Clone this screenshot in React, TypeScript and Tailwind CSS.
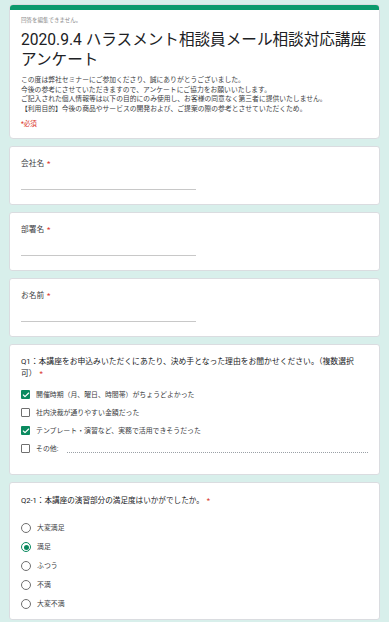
import { Check } from "lucide-react";

const font = "font-['Roboto','Noto_Sans_CJK_JP',sans-serif]";

function Req() {
  return <span className="inline-block text-[#d93025] ml-[3px]">*</span>;
}

function TextQuestion({ label }: { label: string }) {
  return (
    <div className="bg-white rounded-[3px] border border-[#dadce0] px-[11px] pt-[12px] pb-[14px]">
      <div className="text-[7.7px] leading-[10px] text-[#3c4043]">
        {label}
        <Req />
      </div>
      <div className="mt-[20px] w-[175px] border-b border-[#c8c8c8] h-[1px]" />
    </div>
  );
}

const options = [
  { label: "開催時期（月、曜日、時間帯）がちょうどよかった", checked: true },
  { label: "社内決裁が通りやすい金額だった", checked: false },
  { label: "テンプレート・演習など、実務で活用できそうだった", checked: true },
];

const rates = ["大変満足", "満足", "ふつう", "不満", "大変不満"];

function Box({ checked }: { checked: boolean }) {
  return checked ? (
    <span className="w-[9px] h-[9px] rounded-[1px] bg-[#0a8a5f] flex items-center justify-center">
      <Check size={8} strokeWidth={3.5} className="text-white" />
    </span>
  ) : (
    <span className="w-[9px] h-[9px] rounded-[1px] border border-[#6f6f6f]" />
  );
}

export default function App() {
  return (
    <div className={`${font} min-h-screen bg-[#d8efeb] px-[9px] pt-[4px] pb-[10px]`}>
      <div className="flex flex-col gap-[7px]">
        <div className="bg-white rounded-[4px] border border-[#dadce0] overflow-hidden">
          <div className="h-[5px] bg-[#0b9a6d]" />
          <div className="px-[11px] pt-[6px] pb-[9px]">
            <div className="text-[5.5px] text-[#8a8a8a]">回答を編集できません。</div>
            <h1 className="mt-[6px] text-[15.6px] leading-[20px] text-[#202124] font-normal">
              2020.9.4 ハラスメント相談員メール相談対応講座アンケート
            </h1>
            <div className="mt-[6px] text-[6.8px] leading-[9.6px] text-[#3c4043]">
              <div>この度は弊社セミナーにご参加くださり、誠にありがとうございました。</div>
              <div>今後の参考にさせていただきますので、アンケートにご協力をお願いいたします。</div>
              <div>ご記入された個人情報等は以下の目的にのみ使用し、お客様の同意なく第三者に提供いたしません。</div>
              <div>【利用目的】今後の商品やサービスの開発および、ご提案の際の参考とさせていただくため。</div>
            </div>
            <div className="mt-[5px] text-[6.5px] text-[#d93025]">*必須</div>
          </div>
        </div>

        <TextQuestion label="会社名" />
        <TextQuestion label="部署名" />
        <TextQuestion label="お名前" />

        <div className="bg-white rounded-[3px] border border-[#dadce0] px-[11px] pt-[11px] pb-[21px]">
          <div className="text-[7.8px] leading-[11.5px] text-[#202124] pr-[6px]">
            Q1：本講座をお申込みいただくにあたり、決め手となった理由をお聞かせください。（複数選択可）
            <Req />
          </div>
          <div className="mt-[11px] flex flex-col gap-[9px]">
            {options.map((o) => (
              <div key={o.label} className="flex items-center gap-[6px] h-[9px]">
                <Box checked={o.checked} />
                <span className="text-[6.9px] text-[#3c4043]">{o.label}</span>
              </div>
            ))}
            <div className="flex items-center gap-[6px] h-[9px]">
              <Box checked={false} />
              <span className="text-[6.9px] text-[#3c4043]">その他:</span>
              <span className="ml-[3px] mt-[8px] w-[301px] border-b border-dotted border-[#9aa0a6]" />
            </div>
          </div>
        </div>

        <div className="bg-white rounded-[3px] border border-[#dadce0] px-[11px] pt-[12px] pb-[10px]">
          <div className="text-[7.6px] leading-[11px] text-[#202124]">
            Q2-1：本講座の演習部分の満足度はいかがでしたか。
            <Req />
          </div>
          <div className="mt-[17px] flex flex-col gap-[9px]">
            {rates.map((r) => (
              <div key={r} className="flex items-center gap-[6px] h-[10px]">
                {r === "満足" ? (
                  <span className="w-[10px] h-[10px] rounded-full border border-[#0a8a5f] flex items-center justify-center">
                    <span className="w-[5px] h-[5px] rounded-full bg-[#0a8a5f]" />
                  </span>
                ) : (
                  <span className="w-[10px] h-[10px] rounded-full border border-[#6f6f6f]" />
                )}
                <span className="text-[6.9px] text-[#3c4043]">{r}</span>
              </div>
            ))}
          </div>
        </div>
      </div>
    </div>
  );
}
